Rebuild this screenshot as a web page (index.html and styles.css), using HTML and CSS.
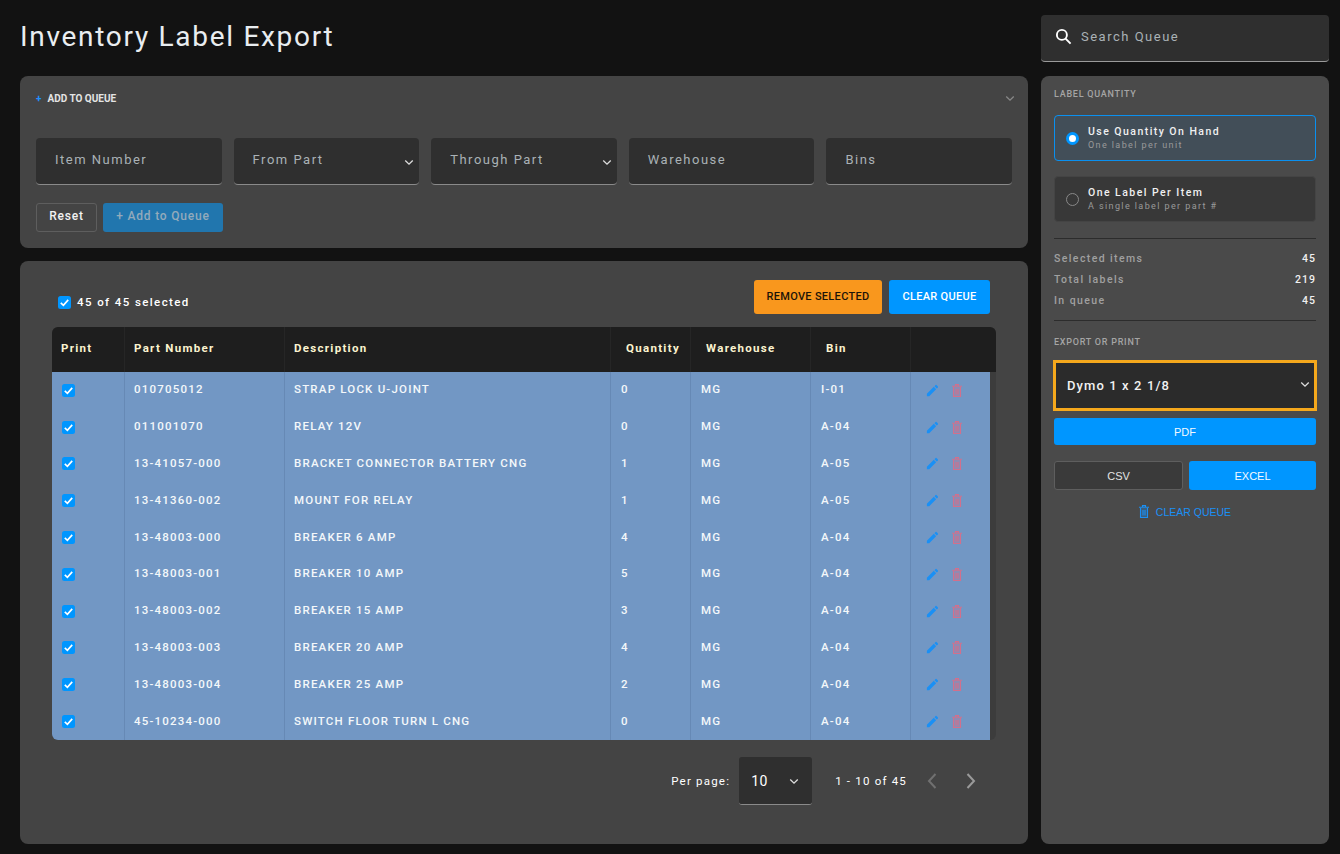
FILE: index.html
```html
<!DOCTYPE html>
<html lang="en">
<head>
  <meta charset="UTF-8" />
  <title>Inventory Label Export</title>
  <link rel="stylesheet" href="styles.css">
</head>
<body>
  <svg class="icon-defs" aria-hidden="true">
    <symbol id="i-chevron" viewBox="0 0 12 8"><path d="M1.5 1.5 6 6l4.5-4.5" fill="none" stroke="currentColor" stroke-width="1.6"/></symbol>
    <symbol id="i-check" viewBox="0 0 14 14"><path d="M3 7.4 5.8 10 11 4.2" fill="none" stroke="currentColor" stroke-width="1.8"/></symbol>
    <symbol id="i-pencil" viewBox="0 0 24 24"><path fill="currentColor" d="M3 17.25V21h3.75L17.81 9.94l-3.75-3.75L3 17.25zM20.71 7.04a1 1 0 0 0 0-1.41l-2.34-2.34a1 1 0 0 0-1.41 0l-1.83 1.83 3.75 3.75 1.83-1.83z"/></symbol>
    <symbol id="i-trash" viewBox="0 0 10 13"><path d="M1.500 3h7v9.500h-7z" fill="currentColor" fill-opacity=".3"/><path d="M0 2.200h10M3.500 2V.600h3V2M1.500 3v9.500h7V3M4 5v5.500M6 5v5.500" fill="none" stroke="currentColor" stroke-width="1.100"/></symbol>
  </svg>

  <div class="page">
    <main class="main-col">
      <h1 class="page-title">Inventory Label Export</h1>

      <section class="panel add-panel">
        <div class="add-head">
          <span class="add-title"><span class="plus">+</span>ADD TO QUEUE</span>
          <svg class="add-toggle"><use href="#i-chevron"/></svg>
        </div>
        <div class="add-fields">
          <div class="field">Item Number</div>
          <div class="field">From Part<svg class="caret"><use href="#i-chevron"/></svg></div>
          <div class="field">Through Part<svg class="caret"><use href="#i-chevron"/></svg></div>
          <div class="field">Warehouse</div>
          <div class="field">Bins</div>
        </div>
        <div class="add-actions">
          <button class="btn btn-reset">Reset</button>
          <button class="btn btn-add">+ Add to Queue</button>
        </div>
      </section>

      <section class="panel queue-panel">
        <div class="toolbar">
          <label class="select-all"><span class="check"><svg><use href="#i-check"/></svg></span>45 of 45 selected</label>
          <div class="toolbar-btns">
            <button class="btn btn-remove">REMOVE SELECTED</button>
            <button class="btn btn-clear">CLEAR QUEUE</button>
          </div>
        </div>

        <div class="queue-table">
          <div class="thead">
            <div class="th th-print">Print</div>
            <div class="th">Part Number</div>
            <div class="th">Description</div>
            <div class="th th-wide">Quantity</div>
            <div class="th th-wide">Warehouse</div>
            <div class="th th-wide">Bin</div>
            <div class="th"></div>
          </div>
          <div class="tbody">
            <div class="tr">
              <div class="td"><span class="check"><svg><use href="#i-check"/></svg></span></div>
              <div class="td">010705012</div><div class="td">STRAP LOCK U-JOINT</div><div class="td">0</div><div class="td">MG</div><div class="td">I-01</div>
              <div class="td td-actions"><svg class="edit"><use href="#i-pencil"/></svg><svg class="del"><use href="#i-trash"/></svg></div>
            </div>
            <div class="tr">
              <div class="td"><span class="check"><svg><use href="#i-check"/></svg></span></div>
              <div class="td">011001070</div><div class="td">RELAY 12V</div><div class="td">0</div><div class="td">MG</div><div class="td">A-04</div>
              <div class="td td-actions"><svg class="edit"><use href="#i-pencil"/></svg><svg class="del"><use href="#i-trash"/></svg></div>
            </div>
            <div class="tr">
              <div class="td"><span class="check"><svg><use href="#i-check"/></svg></span></div>
              <div class="td">13-41057-000</div><div class="td">BRACKET CONNECTOR BATTERY CNG</div><div class="td">1</div><div class="td">MG</div><div class="td">A-05</div>
              <div class="td td-actions"><svg class="edit"><use href="#i-pencil"/></svg><svg class="del"><use href="#i-trash"/></svg></div>
            </div>
            <div class="tr">
              <div class="td"><span class="check"><svg><use href="#i-check"/></svg></span></div>
              <div class="td">13-41360-002</div><div class="td">MOUNT FOR RELAY</div><div class="td">1</div><div class="td">MG</div><div class="td">A-05</div>
              <div class="td td-actions"><svg class="edit"><use href="#i-pencil"/></svg><svg class="del"><use href="#i-trash"/></svg></div>
            </div>
            <div class="tr">
              <div class="td"><span class="check"><svg><use href="#i-check"/></svg></span></div>
              <div class="td">13-48003-000</div><div class="td">BREAKER 6 AMP</div><div class="td">4</div><div class="td">MG</div><div class="td">A-04</div>
              <div class="td td-actions"><svg class="edit"><use href="#i-pencil"/></svg><svg class="del"><use href="#i-trash"/></svg></div>
            </div>
            <div class="tr">
              <div class="td"><span class="check"><svg><use href="#i-check"/></svg></span></div>
              <div class="td">13-48003-001</div><div class="td">BREAKER 10 AMP</div><div class="td">5</div><div class="td">MG</div><div class="td">A-04</div>
              <div class="td td-actions"><svg class="edit"><use href="#i-pencil"/></svg><svg class="del"><use href="#i-trash"/></svg></div>
            </div>
            <div class="tr">
              <div class="td"><span class="check"><svg><use href="#i-check"/></svg></span></div>
              <div class="td">13-48003-002</div><div class="td">BREAKER 15 AMP</div><div class="td">3</div><div class="td">MG</div><div class="td">A-04</div>
              <div class="td td-actions"><svg class="edit"><use href="#i-pencil"/></svg><svg class="del"><use href="#i-trash"/></svg></div>
            </div>
            <div class="tr">
              <div class="td"><span class="check"><svg><use href="#i-check"/></svg></span></div>
              <div class="td">13-48003-003</div><div class="td">BREAKER 20 AMP</div><div class="td">4</div><div class="td">MG</div><div class="td">A-04</div>
              <div class="td td-actions"><svg class="edit"><use href="#i-pencil"/></svg><svg class="del"><use href="#i-trash"/></svg></div>
            </div>
            <div class="tr">
              <div class="td"><span class="check"><svg><use href="#i-check"/></svg></span></div>
              <div class="td">13-48003-004</div><div class="td">BREAKER 25 AMP</div><div class="td">2</div><div class="td">MG</div><div class="td">A-04</div>
              <div class="td td-actions"><svg class="edit"><use href="#i-pencil"/></svg><svg class="del"><use href="#i-trash"/></svg></div>
            </div>
            <div class="tr">
              <div class="td"><span class="check"><svg><use href="#i-check"/></svg></span></div>
              <div class="td">45-10234-000</div><div class="td">SWITCH FLOOR TURN L CNG</div><div class="td">0</div><div class="td">MG</div><div class="td">A-04</div>
              <div class="td td-actions"><svg class="edit"><use href="#i-pencil"/></svg><svg class="del"><use href="#i-trash"/></svg></div>
            </div>
          </div>
        </div>

        <div class="pager">
          <span class="per-page">Per page:</span>
          <div class="page-select">10<svg class="caret"><use href="#i-chevron"/></svg></div>
          <span class="page-range">1 - 10 of 45</span>
          <svg class="page-arrow prev" viewBox="0 0 12 18"><path d="M9.5 2 3 9l6.500 7" fill="none" stroke="currentColor" stroke-width="2"/></svg>
          <svg class="page-arrow next" viewBox="0 0 12 18"><path d="M2.500 2 9 9l-6.500 7" fill="none" stroke="currentColor" stroke-width="2"/></svg>
        </div>
      </section>
    </main>

    <aside class="side-col">
      <div class="search">
        <svg class="search-icon" viewBox="0 0 18 18"><circle cx="7.300" cy="7.300" r="5.300" fill="none" stroke="currentColor" stroke-width="2"/><path d="M11.200 11.200 16.500 16.500" stroke="currentColor" stroke-width="2"/></svg>
        Search Queue
      </div>

      <div class="side-panel">
        <div class="side-label">LABEL QUANTITY</div>
        <div class="option option-on">
          <span class="radio"></span>
          <div><div class="option-name">Use Quantity On Hand</div><div class="option-sub">One label per unit</div></div>
        </div>
        <div class="option">
          <span class="radio"></span>
          <div><div class="option-name">One Label Per Item</div><div class="option-sub">A single label per part #</div></div>
        </div>

        <div class="stats">
          <div class="stat"><span>Selected items</span><b>45</b></div>
          <div class="stat"><span>Total labels</span><b>219</b></div>
          <div class="stat"><span>In queue</span><b>45</b></div>
        </div>

        <div class="side-label export-label">EXPORT OR PRINT</div>
        <div class="format-select">Dymo 1 x 2 1/8<svg class="caret"><use href="#i-chevron"/></svg></div>
        <button class="btn btn-pdf">PDF</button>
        <div class="export-row">
          <button class="btn btn-csv">CSV</button>
          <button class="btn btn-excel">EXCEL</button>
        </div>
        <div class="clear-link"><svg><use href="#i-trash"/></svg>CLEAR QUEUE</div>
      </div>
    </aside>
  </div>
</body>
</html>
```

FILE: styles.css
```css
* {
  box-sizing: border-box;
}

html, body {
  height: 100%;
}

body {
  margin: 0;
  background: #121212;
  color: #fff;
  font-family: Roboto, "Liberation Sans", sans-serif;
  overflow: hidden;
}

.icon-defs {
  display: none;
}

.page {
  display: flex;
  height: 854px;
  padding: 0 11px 10px 20px;
  gap: 13px;
}

.main-col {
  width: 1008px;
  display: flex;
  flex-direction: column;
}

.side-col {
  width: 288px;
  display: flex;
  flex-direction: column;
  padding-top: 15px;
}

.page-title {
  margin: 0;
  height: 76px;
  padding-top: 19px;
  font-size: 28px;
  line-height: 36px;
  font-weight: 400;
  letter-spacing: 1.7px;
  color: #e9edf0;
}

.panel {
  background: #444;
  border-radius: 8px;
}

/* add to queue */
.add-panel {
  height: 172px;
  padding: 0 16px;
}

.add-head {
  height: 62px;
  padding-top: 16px;
  display: flex;
  justify-content: space-between;
  align-items: flex-start;
}

.add-title {
  font-size: 10px;
  font-weight: 700;
  line-height: 14px;
  color: #e4e4e4;
}

.plus {
  color: #2090ff;
  margin-right: 6px;
}

.add-toggle {
  width: 10px;
  height: 7px;
  margin-top: 3px;
  margin-right: -3px;
  color: #888;
}

.add-fields {
  display: grid;
  grid-template-columns: repeat(5, 1fr);
  gap: 12px;
}

.field {
  position: relative;
  height: 47px;
  padding: 15px 19px 0;
  background: #2f2f2f;
  border-bottom: 1px solid #8a8a8a;
  border-radius: 4px;
  font-size: 13px;
  line-height: 14px;
  letter-spacing: 1.500px;
  color: #aab2b6;
}

.caret {
  position: absolute;
  right: 5px;
  top: 21px;
  width: 10px;
  height: 7px;
  color: #ddd;
}

.add-actions {
  display: flex;
  gap: 6px;
  margin-top: 18px;
}

.btn {
  border: 0;
  border-radius: 3px;
  font-family: inherit;
  padding: 0;
}

.btn-reset, .btn-add {
  height: 29px;
  padding-bottom: 3px;
  font-size: 12px;
  font-weight: 500;
  letter-spacing: 0.800px;
}

.btn-reset {
  width: 61px;
  background: transparent;
  border: 1px solid #5e5e5e;
  color: #f2f2f2;
}

.btn-add {
  width: 120px;
  background: #2176ae;
  color: #93aabb;
}

/* queue table */
.queue-panel {
  flex: 1;
  margin-top: 13px;
  padding: 19px 32px 0;
}

.toolbar {
  display: flex;
  justify-content: space-between;
  height: 34px;
  padding: 0 6px;
  margin-bottom: 13px;
}

.select-all {
  display: flex;
  align-items: center;
  gap: 6px;
  padding-top: 10px;
  font-size: 11.500px;
  font-weight: 500;
  letter-spacing: 1.400px;
}

.toolbar-btns {
  display: flex;
  gap: 7px;
}

.btn-remove, .btn-clear {
  height: 34px;
  padding-bottom: 2px;
  font-size: 11px;
  font-weight: 500;
  letter-spacing: 0.300px;
}

.btn-remove {
  width: 128px;
  background: #f9971d;
  color: #1c1408;
}

.btn-clear {
  width: 101px;
  background: #0096ff;
  color: #fff;
}

.check {
  display: inline-flex;
  width: 13px;
  height: 13px;
  background: #0096ff;
  border-radius: 2.500px;
  color: #fff;
  flex: none;
}

.check svg {
  width: 13px;
  height: 13px;
}

.queue-table {
  background: #3c3c3c;
  border-radius: 6px;
  overflow: hidden;
}

.thead {
  display: grid;
  grid-template-columns: 72px 160px 326px 80px 120px 100px 86px;
  height: 45px;
  background: #1e1e1e;
}

.th {
  padding: 0 0 0 9px;
  font-size: 11.500px;
  font-weight: 700;
  line-height: 42px;
  letter-spacing: 1.300px;
  color: #fbf3cf;
  border-left: 1px solid #262626;
}

.th:first-child {
  border-left: 0;
}

.th-print {
  padding-left: 9px;
}

.th-wide {
  padding-left: 15px;
}

.tbody {
  width: 938px;
  background: #7297c4;
}

.tr {
  display: grid;
  grid-template-columns: 72px 160px 326px 80px 120px 100px 80px;
  height: 36.800px;
}

.td {
  padding: 0 0 2px 9px;
  display: flex;
  align-items: center;
  border-left: 1px solid #6689b5;
  font-size: 11.500px;
  font-weight: 500;
  letter-spacing: 1.200px;
  color: #f4f7fa;
}

.td:first-child {
  padding: 0 0 0 10px;
  border-left: 0;
}

.td:nth-child(n+4) {
  padding-left: 10px;
}

.tr .td-actions {
  padding: 0 0 0 14px;
  gap: 12px;
}

.edit {
  width: 15px;
  height: 15px;
  color: #1a90f5;
}

.del {
  width: 10px;
  height: 13px;
  color: #d2708c;
}

/* pager */
.pager {
  display: flex;
  align-items: center;
  justify-content: flex-end;
  margin-top: 17px;
  padding-right: 19px;
  height: 48px;
  font-size: 11.500px;
  font-weight: 400;
  letter-spacing: 1.200px;
}

.per-page {
  margin-right: 9px;
}

.page-select {
  position: relative;
  width: 73px;
  height: 48px;
  padding: 16px 12px 0;
  background: #2f2f2f;
  border-bottom: 1px solid #8a8a8a;
  border-radius: 3px;
  font-size: 14px;
  font-weight: 400;
  letter-spacing: 0.400px;
  margin-right: 23px;
}

.page-select .caret {
  right: 13px;
  top: 21px;
}

.page-arrow {
  width: 12px;
  height: 18px;
}

.page-arrow.prev {
  margin-left: 19px;
  color: #707070;
}

.page-arrow.next {
  margin-left: 27px;
  color: #9a9a9a;
}

/* right column */
.search {
  height: 47px;
  flex: none;
  display: flex;
  align-items: center;
  gap: 9px;
  padding: 0 14px 4px;
  background: #2f2f2f;
  border-bottom: 1px solid #9a9a9a;
  border-radius: 4px;
  font-size: 13px;
  letter-spacing: 1.500px;
  color: #aab2b6;
}

.search-icon {
  width: 17px;
  height: 17px;
  color: #fff;
}

.side-panel {
  flex: 1;
  margin-top: 14px;
  padding: 13px 13px 0;
  background: #4a4a4a;
  border-radius: 8px;
}

.side-label {
  font-size: 9px;
  font-weight: 500;
  line-height: 11px;
  letter-spacing: 0.750px;
  color: #a5a5a5;
}

.option {
  display: flex;
  align-items: center;
  gap: 9px;
  height: 46px;
  margin-top: 15px;
  padding: 0 11px;
  background: #383838;
  border: 1px solid #444;
  border-radius: 4px;
}

.option-on {
  background: #424e58;
  border-color: #0a90f0;
}

.radio {
  width: 13px;
  height: 13px;
  flex: none;
  border: 1px solid #888;
  border-radius: 50%;
}

.option-on .radio {
  border: 3.500px solid #0096ff;
  background: #fff;
}

.option-name {
  font-size: 10.500px;
  font-weight: 500;
  line-height: 14px;
  letter-spacing: 1.450px;
  color: #f0f0f0;
}

.option-sub {
  font-size: 9px;
  line-height: 13px;
  letter-spacing: 1.400px;
  color: #9a9a9a;
}

.stats {
  margin-top: 16px;
  padding: 9px 0;
  border-top: 1px solid #2c2c2c;
  border-bottom: 1px solid #2c2c2c;
}

.stat {
  display: flex;
  justify-content: space-between;
  height: 21px;
  align-items: center;
  font-size: 10.500px;
  font-weight: 500;
  letter-spacing: 1.400px;
  color: #a0a0a0;
}

.stat b {
  font-weight: 500;
  letter-spacing: 1px;
  color: #f0f0f0;
}

.export-label {
  margin-top: 16px;
}

.format-select {
  position: relative;
  height: 51px;
  margin: 12px -1px 0;
  padding: 0 11px;
  display: flex;
  align-items: center;
  background: #2b2b2b;
  border: 3px solid #f5a81c;
  font-size: 13px;
  font-weight: 500;
  letter-spacing: 1.100px;
  color: #f2f2f2;
}

.format-select .caret {
  top: 18px;
  right: 4px;
}

.btn-pdf, .btn-excel {
  background: #0096ff;
  color: #f4f9ff;
}

.btn-pdf {
  display: block;
  width: 100%;
  height: 27px;
  margin-top: 7px;
  font-family: "Liberation Sans", sans-serif;
  font-size: 11px;
}

.export-row {
  display: flex;
  gap: 6px;
  margin-top: 16px;
}

.btn-csv, .btn-excel {
  height: 29px;
  font-family: "Liberation Sans", sans-serif;
  font-size: 11px;
}

.btn-csv {
  width: 129px;
  background: #3a3a3a;
  border: 1px solid #5e5e5e;
  color: #e4e4e4;
}

.btn-excel {
  width: 127px;
}

.clear-link {
  display: flex;
  justify-content: center;
  align-items: center;
  gap: 7px;
  margin-top: 15px;
  font-family: "Liberation Sans", sans-serif;
  font-size: 10.500px;
  color: #1a90f5;
}

.clear-link svg {
  width: 10px;
  height: 13px;
}
```
